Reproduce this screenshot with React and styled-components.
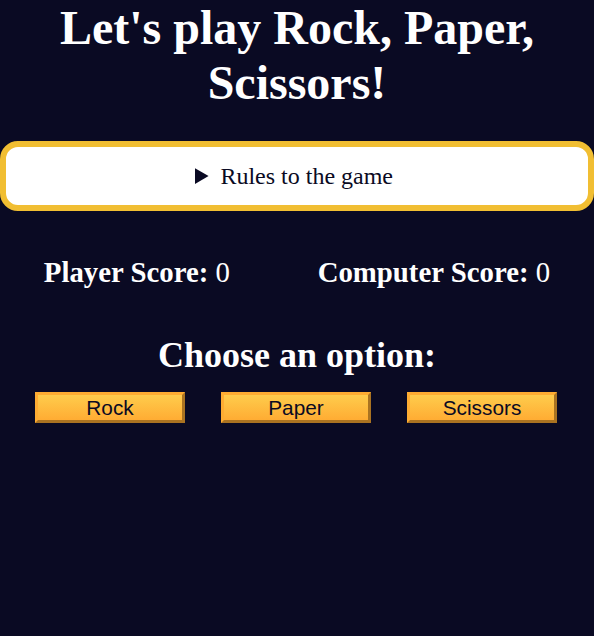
import React from "react";
import styled, {createGlobalStyle} from "styled-components";

const GlobalStyle = createGlobalStyle`
  * {
    margin: 0;
    padding: 0;
    box-sizing: border-box;
  }

  body {
    background-color: #0a0a23;
    color: #ffffff;
    text-align: center;
    font-family: "Liberation Serif", "Times New Roman", serif;
  }
`;

const options = ['Rock', 'Paper', 'Scissors'];

const App = () => {
  return (
    <Main>
      <GlobalStyle/>
      <Title>Let's play Rock, Paper, Scissors!</Title>
      <RulesContainer>
        <Summary>Rules to the game</Summary>
      </RulesContainer>
      <ScoreContainer>
        <Score><strong>Player Score:</strong> <span>0</span></Score>
        <Score><strong>Computer Score:</strong> <span>0</span></Score>
      </ScoreContainer>
      <OptionsContainer>
        <OptionsTitle>Choose an option:</OptionsTitle>
        <ButtonRow>
          {options.map((option) => (
            <Button key={option}>{option}</Button>
          ))}
        </ButtonRow>
      </OptionsContainer>
    </Main>
  )
}

const Main = styled.main`
  min-height: 100vh;
`;

const Title = styled.h1`
  font-size: 48px;
  line-height: 55px;
  padding: 0 50px;
  margin-top: 0;
  margin-bottom: 31px;
`;

const RulesContainer = styled.details`
  background-color: #ffffff;
  color: #0a0a23;
  border: 6px solid #f1be32;
  border-radius: 18px;
  padding: 15px 0;
`;

const Summary = styled.summary`
  font-size: 24px;
  line-height: 28px;
  padding-right: 6px;
  cursor: pointer;
`;

const ScoreContainer = styled.div`
  display: flex;
  justify-content: space-around;
  margin-top: 45px;
`;

const Score = styled.p`
  font-size: 28.8px;
  line-height: 33px;
`;

const OptionsContainer = styled.div`
  margin-top: 46px;
`;

const OptionsTitle = styled.h2`
  font-size: 36px;
  line-height: 41px;
`;

const ButtonRow = styled.div`
  display: flex;
  justify-content: center;
  gap: 36px;
  margin-top: 16px;
  padding-right: 2px;
`;

const Button = styled.button`
  width: 150px;
  height: 31px;
  font-family: "Liberation Sans", Arial, sans-serif;
  font-size: 20.8px;
  color: #0a0a23;
  background-color: #feac32;
  background-image: linear-gradient(#fecc4c, #ffac33);
  border: 3px outset #feac32;
  cursor: pointer;
`;

export default App;
